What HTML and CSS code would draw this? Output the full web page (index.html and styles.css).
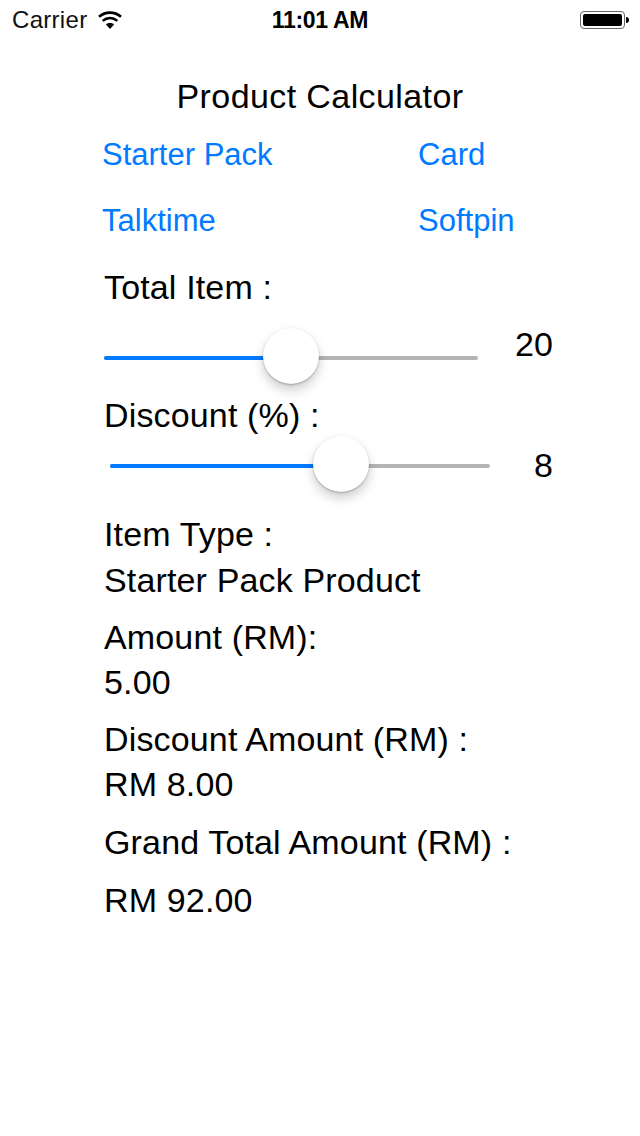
FILE: index.html
```html
<!DOCTYPE html>
<html lang="en">
<head>
  <meta charset="UTF-8" />
  <meta name="viewport" content="width=device-width, initial-scale=1.0"/>
  <title>Product Calculator</title>
  <link rel="stylesheet" href="styles.css">
</head>
<body>

<!-- Status bar -->
<div class="status-bar">
  <div class="status-left">
    <span class="carrier">Carrier</span>
    <svg class="wifi" width="24" height="18" viewBox="0 0 24 18">
      <path d="M12 18 L7.9 13.4 C10.3 11.5 13.7 11.5 16.1 13.4 Z" fill="#000"/>
      <path d="M4.7 9.9 C9 6.1 15 6.1 19.3 9.9" fill="none" stroke="#000" stroke-width="2.6"/>
      <path d="M1 5.7 C7.4 0.2 16.6 0.2 23 5.7" fill="none" stroke="#000" stroke-width="2.6"/>
    </svg>
  </div>
  <div class="status-time">11:01 AM</div>
  <div class="battery"><div class="battery-level"></div></div>
</div>

<h1 class="title">Product Calculator</h1>

<div class="buttons">
  <a href="#">Starter Pack</a>
  <a href="#">Card</a>
  <a href="#">Talktime</a>
  <a href="#">Softpin</a>
</div>

<div class="calc">
  <div class="line">Total Item :</div>
  <div class="slider-row row-total">
    <div class="slider slider-total">
      <div class="fill" style="width: 187px"></div>
      <div class="thumb" style="left: 159px"></div>
    </div>
    <div class="value value-total">20</div>
  </div>

  <div class="line discount-label">Discount (%) :</div>
  <div class="slider-row row-discount">
    <div class="slider slider-discount">
      <div class="fill" style="width: 231px"></div>
      <div class="thumb" style="left: 203px"></div>
    </div>
    <div class="value">8</div>
  </div>

  <div class="results">
    <div class="line">Item Type :</div>
    <div class="line item-name">Starter Pack Product</div>
    <div class="line gap">Amount (RM):</div>
    <div class="line">5.00</div>
    <div class="line gap">Discount Amount (RM) :</div>
    <div class="line">RM 8.00</div>
    <div class="line gap-wide">Grand Total Amount (RM) :</div>
    <div class="line gap-wide">RM 92.00</div>
  </div>
</div>

</body>
</html>
```

FILE: styles.css
```css
body {
  margin: 0;
  font-family: "Liberation Sans", Arial, sans-serif;
  background-color: #fff;
  color: #000;
  width: 640px;
  height: 1136px;
  overflow: hidden;
}

.status-bar {
  display: flex;
  justify-content: space-between;
  align-items: center;
  height: 40px;
  padding: 0 15px 0 12px;
  font-size: 24px;
  position: relative;
}
.status-left {
  display: flex;
  align-items: center;
  gap: 11px;
  color: #111;
}
.carrier {
  letter-spacing: 0.3px;
}
.wifi {
  margin-top: 0;
}
.status-time {
  position: absolute;
  left: 0;
  right: 0;
  text-align: center;
  font-size: 23px;
  font-weight: bold;
  letter-spacing: -0.3px;
  pointer-events: none;
}
.battery {
  width: 45px;
  height: 18px;
  border: 1px solid #666;
  border-radius: 4px;
  padding: 2px;
  box-sizing: border-box;
  position: relative;
}
.battery-level {
  width: 100%;
  height: 100%;
  background-color: #000;
  border-radius: 2px;
}
.battery::after {
  content: "";
  position: absolute;
  right: -5px;
  top: 5px;
  width: 3px;
  height: 6px;
  background-color: #000;
  border-radius: 0 3px 3px 0;
}

.title {
  margin: 34px 0 0;
  font-size: 34px;
  font-weight: normal;
  letter-spacing: 0.4px;
  line-height: 44px;
  text-align: center;
}

.buttons {
  display: grid;
  grid-template-columns: 316px auto;
  grid-auto-rows: 66px;
  margin: 4px 0 0 102px;
}
.buttons a {
  color: #007aff;
  text-decoration: none;
  font-size: 31px;
  line-height: 66px;
}

.calc {
  padding: 11px 0 0 104px;
  font-size: 34px;
  letter-spacing: 0.15px;
}
.line {
  line-height: 44px;
  white-space: nowrap;
}
.discount-label {
  margin-top: 12px;
}

.slider-row {
  display: flex;
  align-items: center;
  width: 449px;
  height: 48px;
}
.row-total {
  margin-top: 24px;
}
.row-discount {
  margin-top: 4px;
}
.slider {
  height: 4px;
  background-color: #b5b5b5;
  border-radius: 2px;
  position: relative;
  margin-top: 1px;
}
.slider-total {
  width: 374px;
}
.slider-discount {
  width: 380px;
  margin-left: 6px;
}
.fill {
  height: 100%;
  background-color: #007aff;
  border-radius: 2px;
}
.thumb {
  position: absolute;
  top: -28px;
  width: 56px;
  height: 56px;
  background-color: #fff;
  border-radius: 50%;
  box-shadow: 0 6px 12px rgba(0,0,0,0.2), 0 1px 2px rgba(0,0,0,0.25);
}
.value {
  margin-left: auto;
}
.value-total {
  margin-bottom: 26px;
}

.results {
  margin-top: 23px;
}
.results .line {
  line-height: 45px;
}
.item-name {
  margin-top: 1px;
}
.gap {
  margin-top: 12px;
}
.gap-wide {
  margin-top: 13px;
}
```
